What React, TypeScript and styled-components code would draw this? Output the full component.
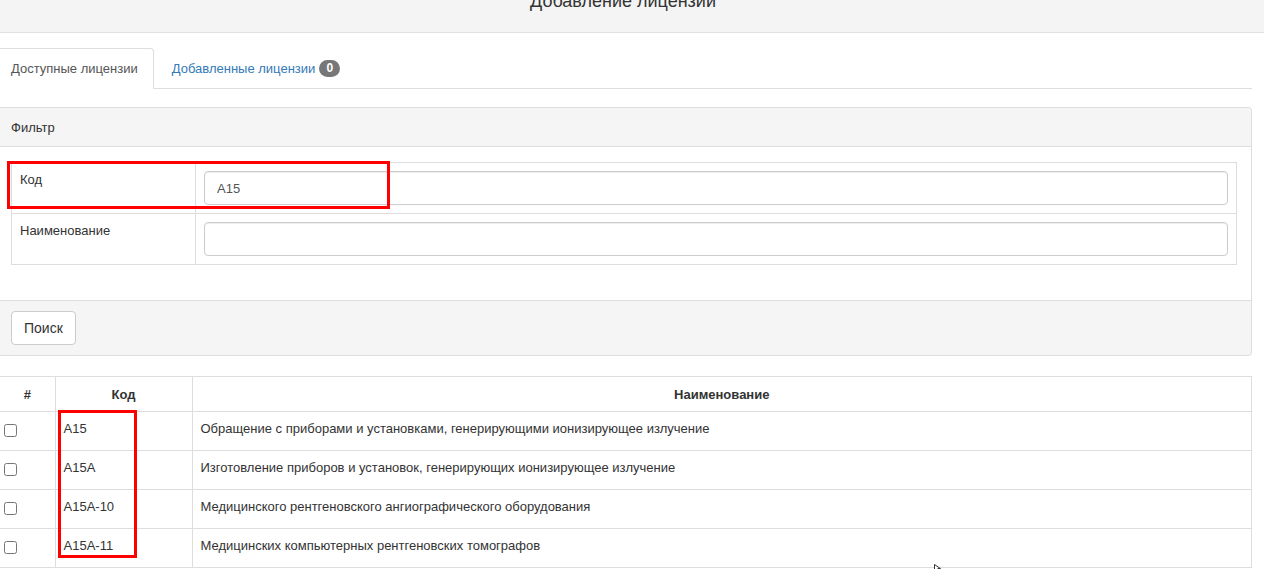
import React from "react";
import styled, { createGlobalStyle } from "styled-components";

const Global = createGlobalStyle`
  html, body { margin: 0; padding: 0; background: #fff; }
  body {
    font-family: "Liberation Sans", Arial, sans-serif;
    font-size: 13px;
    color: #333;
    overflow: hidden;
  }
  * { box-sizing: border-box; }
`;

const Page = styled.div`
  position: relative;
  width: 1264px;
  height: 569px;
  overflow: hidden;
`;

const Header = styled.div`
  height: 33px;
  background: #f4f4f4;
  border-bottom: 1px solid #e1e1e1;
  padding-right: 18px;
  overflow: hidden;
  display: flex;
  justify-content: center;
`;

const Title = styled.h4`
  margin: -9px 0 0;
  font-size: 18px;
  font-weight: normal;
  line-height: 20px;
  color: #333;
`;

const Content = styled.div`
  width: 1252px;
  padding-top: 15px;
`;

const Tabs = styled.ul`
  list-style: none;
  margin: 0;
  padding: 0;
  display: flex;
  border-bottom: 1px solid #ddd;
`;

const Tab = styled.li<{ $active?: boolean }>`
  height: 41px;
  margin: 0 2px -1px 0;
  padding: 0 15px 0 ${(p) => (p.$active ? "11px" : "16px")};
  display: flex;
  align-items: center;
  gap: 4px;
  border: 1px solid ${(p) => (p.$active ? "#ddd" : "transparent")};
  border-bottom-color: ${(p) => (p.$active ? "#fff" : "transparent")};
  border-left: none;
  border-radius: 0 4px 0 0;
  background: ${(p) => (p.$active ? "#fff" : "transparent")};
  color: ${(p) => (p.$active ? "#555" : "#337ab7")};
  cursor: pointer;
`;

const Badge = styled.span`
  display: inline-block;
  min-width: 21px;
  height: 17px;
  line-height: 17px;
  padding: 0 6px;
  border-radius: 9px;
  background: #777;
  color: #fff;
  font-size: 12px;
  font-weight: bold;
  text-align: center;
`;

const Panel = styled.div`
  margin-top: 18px;
  border: 1px solid #ddd;
  border-left: none;
  border-radius: 0 4px 4px 0;
  overflow: hidden;
`;

const PanelHeading = styled.div`
  height: 39px;
  background: #f5f5f5;
  border-bottom: 1px solid #ddd;
  padding: 0 11px;
  display: flex;
  align-items: center;
`;

const PanelBody = styled.div`
  padding: 15px 14px 35px 11px;
`;

const PanelFooter = styled.div`
  background: #f5f5f5;
  border-top: 1px solid #ddd;
  padding: 10px 11px 10px;
`;

const FilterTable = styled.table`
  width: 100%;
  border-collapse: collapse;
`;

const FilterRow = styled.tr``;

const LabelCell = styled.td`
  width: 184px;
  border: 1px solid #ddd;
  padding: 9px 8px 8px 8px;
  vertical-align: top;
  height: 51px;
`;

const InputCell = styled.td`
  border: 1px solid #ddd;
  padding: 8px 8px 8px 8px;
  vertical-align: top;
`;

const TextInput = styled.input`
  display: block;
  width: 100%;
  height: 34px;
  padding: 6px 12px;
  border: 1px solid #ccc;
  border-radius: 4px;
  font-family: inherit;
  font-size: 13px;
  color: #555;
  box-shadow: inset 0 1px 1px rgba(0, 0, 0, 0.075);
  outline: none;
`;

const Button = styled.button`
  display: block;
  height: 34px;
  padding: 0 12px;
  border: 1px solid #ccc;
  border-radius: 4px;
  background: #fff;
  font-family: inherit;
  font-size: 14px;
  color: #333;
  cursor: pointer;
`;

const DataTable = styled.table`
  margin-top: 20px;
  width: 100%;
  border-collapse: collapse;
  font-size: 13px;
`;

const Th = styled.th<{ $w?: number }>`
  ${(p) => (p.$w ? `width: ${p.$w}px;` : "")}
  height: 35px;
  border: 1px solid #ddd;
  font-weight: bold;
  text-align: center;
  padding: 0 8px;
  color: #333;
  &:first-child { border-left: none; }
`;

const Td = styled.td`
  height: 39px;
  border: 1px solid #ddd;
  padding: 8px 8px 0;
  line-height: 18px;
  vertical-align: top;
  color: #333;
  &:first-child { border-left: none; padding: 8px 4px 0; }
`;

const Check = styled.input`
  display: block;
  width: 13px;
  height: 13px;
  margin: 4px 0 0 0;
`;

const Highlight = styled.div<{ $l: number; $t: number; $w: number; $h: number }>`
  position: absolute;
  left: ${(p) => p.$l}px;
  top: ${(p) => p.$t}px;
  width: ${(p) => p.$w}px;
  height: ${(p) => p.$h}px;
  border: 3px solid #ff0000;
  pointer-events: none;
`;

const Cursor = styled.svg`
  position: absolute;
  left: 934px;
  top: 564px;
`;

const rows = [
  { code: "А15", name: "Обращение с приборами и установками, генерирующими ионизирующее излучение" },
  { code: "А15А", name: "Изготовление приборов и установок, генерирующих ионизирующее излучение" },
  { code: "А15А-10", name: "Медицинского рентгеновского ангиографического оборудования" },
  { code: "А15А-11", name: "Медицинских компьютерных рентгеновских томографов" },
];

export default function App() {
  return (
    <Page>
      <Global />
      <Header>
        <Title>Добавление лицензии</Title>
      </Header>
      <Content>
        <Tabs>
          <Tab $active>Доступные лицензии</Tab>
          <Tab>
            Добавленные лицензии <Badge>0</Badge>
          </Tab>
        </Tabs>
        <Panel>
          <PanelHeading>Фильтр</PanelHeading>
          <PanelBody>
            <FilterTable>
              <tbody>
                <FilterRow>
                  <LabelCell>Код</LabelCell>
                  <InputCell>
                    <TextInput defaultValue="А15" />
                  </InputCell>
                </FilterRow>
                <FilterRow>
                  <LabelCell>Наименование</LabelCell>
                  <InputCell>
                    <TextInput defaultValue="" />
                  </InputCell>
                </FilterRow>
              </tbody>
            </FilterTable>
          </PanelBody>
          <PanelFooter>
            <Button>Поиск</Button>
          </PanelFooter>
        </Panel>
        <DataTable>
          <thead>
            <tr>
              <Th $w={55}>#</Th>
              <Th $w={137}>Код</Th>
              <Th>Наименование</Th>
            </tr>
          </thead>
          <tbody>
            {rows.map((r) => (
              <tr key={r.code}>
                <Td>
                  <Check type="checkbox" />
                </Td>
                <Td>{r.code}</Td>
                <Td>{r.name}</Td>
              </tr>
            ))}
          </tbody>
        </DataTable>
      </Content>
      <Highlight $l={7} $t={161} $w={383} $h={48} />
      <Highlight $l={58} $t={410} $w={79} $h={148} />
      <Cursor width="8" height="8" viewBox="0 0 8 8">
        <path d="M0.5 0.5 L0.5 7 L2.5 5 L4 7.5 L5 7 L3.8 4.6 L6.5 4.6 Z" fill="#fff" stroke="#000" strokeWidth="0.8" />
      </Cursor>
    </Page>
  );
}
